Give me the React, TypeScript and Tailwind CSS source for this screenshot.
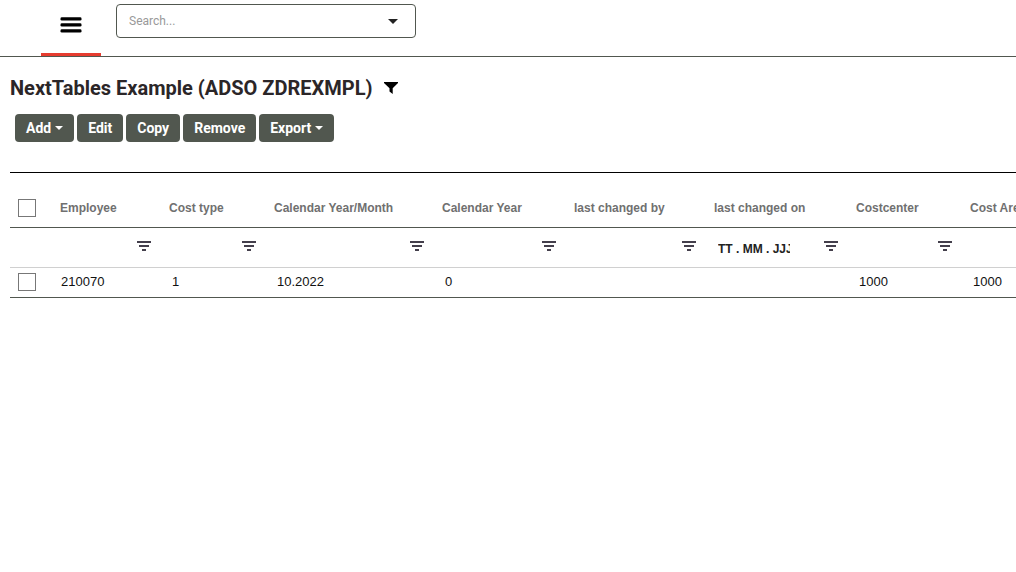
import React from 'react';
import clsx from 'clsx';

type Column = {
  label: string;
  width: string;
  value: string;
  date?: boolean;
};

const columns: Column[] = [
  { label: 'Employee', width: 'w-[109px]', value: '210070' },
  { label: 'Cost type', width: 'w-[105px]', value: '1' },
  { label: 'Calendar Year/Month', width: 'w-[168px]', value: '10.2022' },
  { label: 'Calendar Year', width: 'w-[132px]', value: '0' },
  { label: 'last changed by', width: 'w-[140px]', value: '' },
  { label: 'last changed on', width: 'w-[142px]', value: '', date: true },
  { label: 'Costcenter', width: 'w-[114px]', value: '1000' },
  { label: 'Cost Area', width: 'w-[114px]', value: '1000' },
];

const Caret = ({ className }: { className?: string }) => (
  <svg viewBox="0 0 10 5" className={className} fill="currentColor" aria-hidden="true">
    <path d="M0 0h10L5 5z" />
  </svg>
);

const MenuIcon = () => (
  <svg width="22" height="16" viewBox="0 0 22 16" fill="#000" aria-hidden="true">
    <rect x="0.5" y="0.2" width="21" height="3.300" rx="1.300" />
    <rect x="0.5" y="6.200" width="21" height="3.300" rx="1.300" />
    <rect x="0.5" y="12.200" width="21" height="3.300" rx="1.300" />
  </svg>
);

const FunnelIcon = () => (
  <svg width="14" height="12" viewBox="0 0 14 12" fill="#000" aria-hidden="true">
    <path d="M0 0h14v1L8.700 6.200V12L5.500 9.500V6.200L0 1z" />
  </svg>
);

const FilterIcon = () => (
  <svg width="14" height="10" viewBox="0 0 14 10" fill="#443f4c" shapeRendering="crispEdges" aria-hidden="true">
    <rect width="14" height="2" />
    <rect x="2" y="4" width="10" height="2" />
    <rect x="5" y="8" width="4" height="2" />
  </svg>
);

const Checkbox = ({ label }: { label: string }) => (
  <input
    type="checkbox"
    aria-label={label}
    className="block size-[18px] appearance-none border border-[#777] bg-white checked:bg-[#51574f]"
  />
);

const ToolButton = ({ children, menu }: { children: string; menu?: boolean }) => (
  <button
    type="button"
    className="flex h-7 items-center gap-1 rounded bg-[#51574f] px-[11px] text-sm font-bold text-white"
  >
    {children}
    {menu && <Caret className="h-1 w-2" />}
  </button>
);

const TopBar = () => (
  <header className="flex h-[57px] items-start border-b border-[#51574f] pl-[41px]">
    <button
      type="button"
      aria-label="Menu"
      className="flex h-14 w-[60px] items-center justify-center border-b-3 border-[#e63c2f] pb-1"
    >
      <MenuIcon />
    </button>
    <div className="mt-1 ml-[15px] flex h-[34px] w-[300px] items-center rounded border border-[#51574f] pr-[17px] pl-3">
      <input
        type="text"
        aria-label="Search"
        placeholder="Search..."
        className="min-w-0 flex-1 text-xs outline-none placeholder:text-[#999]"
      />
      <button type="button" aria-label="Show suggestions" className="text-[#222]">
        <Caret className="h-[5px] w-[10px]" />
      </button>
    </div>
  </header>
);

const DataTable = () => (
  <div className="ml-[10px] overflow-x-hidden border-t border-black font-['Liberation_Sans',Arial,sans-serif]">
    <table className="w-[1066px] table-fixed border-collapse">
      <thead>
        <tr className="h-[54px] border-b border-[#51574f]">
          <th scope="col" className="w-[42px] pt-4 pl-2">
            <Checkbox label="Select all rows" />
          </th>
          {columns.map((col) => (
            <th
              key={col.label}
              scope="col"
              className={clsx(col.width, 'pt-4 pl-2 text-left text-xs font-bold whitespace-nowrap text-[#707070]')}
            >
              {col.label}
            </th>
          ))}
        </tr>
        <tr className="h-10 border-b border-[#d0d0d0]">
          <td />
          {columns.map((col) => (
            <td key={col.label} className="p-0">
              <div className="flex items-center justify-between pr-[10px] pl-3">
                <input
                  type="text"
                  aria-label={`Filter ${col.label}`}
                  defaultValue={col.date ? 'TT . MM . JJJJ' : ''}
                  className="w-[72px] min-w-0 pt-1 text-xs font-bold text-[#222] outline-none"
                />
                <button type="button" aria-label={`Filter options for ${col.label}`} className="pb-0.5">
                  <FilterIcon />
                </button>
              </div>
            </td>
          ))}
        </tr>
      </thead>
      <tbody>
        <tr className="h-[30px] border-b border-[#51574f]">
          <td className="p-0 pl-2">
            <Checkbox label="Select row 210070" />
          </td>
          {columns.map((col, i) => (
            <td key={col.label} className={clsx('py-0 text-[13px] text-[#111]', i === 0 ? 'pl-[9px]' : 'pl-[11px]')}>
              {col.value}
            </td>
          ))}
        </tr>
      </tbody>
    </table>
  </div>
);

export default function App() {
  return (
    <div className="min-h-screen overflow-hidden bg-white font-[Roboto,sans-serif]">
      <TopBar />
      <main>
        <div className="flex items-center gap-3 pt-[17px] pl-[10px]">
          <h1 className="text-xl leading-7 font-bold text-[#2b2628]">NextTables Example (ADSO ZDREXMPL)</h1>
          <button type="button" aria-label="Filter table">
            <FunnelIcon />
          </button>
        </div>
        <div className="mt-3 mb-[30px] flex gap-[3px] pl-[15px]">
          <ToolButton menu>Add</ToolButton>
          <ToolButton>Edit</ToolButton>
          <ToolButton>Copy</ToolButton>
          <ToolButton>Remove</ToolButton>
          <ToolButton menu>Export</ToolButton>
        </div>
        <DataTable />
      </main>
    </div>
  );
}
